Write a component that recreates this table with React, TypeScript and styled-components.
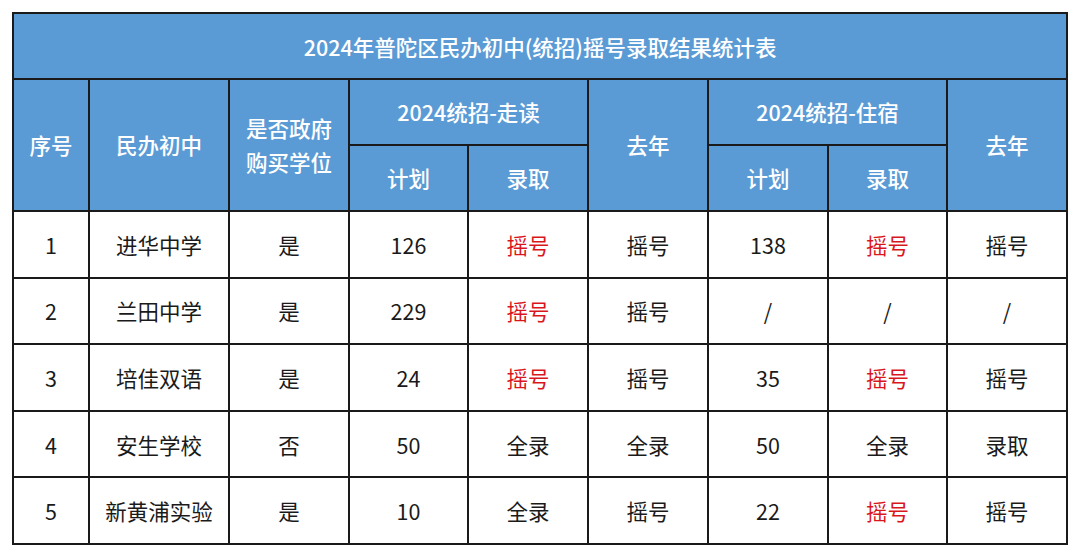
import React from 'react';
import styled, { createGlobalStyle } from 'styled-components';

const GlobalStyle = createGlobalStyle`
  html, body {
    margin: 0;
    padding: 0;
    background: #ffffff;
    font-family: "Noto Sans CJK SC", "Noto Sans", sans-serif;
  }
`;

const Page = styled.div`
  padding: 12px 12px 0 12px;
`;

const Table = styled.table`
  width: 1056px;
  border-collapse: collapse;
  table-layout: fixed;
  border: 2px solid #1a1a1a;
`;

const HeadRow = styled.tr<{ h: number }>`
  height: ${p => p.h}px;
`;

const TitleCell = styled.th`
  padding: 0;
  background: #5b9bd5;
  color: #ffffff;
  font-size: 21.5px;
  font-weight: 500;
  text-align: center;
  border: 2px solid #1a1a1a;
`;

const HeadCell = styled.th`
  padding: 0;
  background: #5b9bd5;
  color: #ffffff;
  font-size: 21.5px;
  font-weight: 500;
  line-height: 34px;
  text-align: center;
  vertical-align: middle;
  border: 2px solid #1a1a1a;
`;

const Row = styled.tr`
  height: 66.6px;
`;

const Cell = styled.td<{ red?: boolean }>`
  padding: 0;
  text-align: center;
  vertical-align: middle;
  font-size: 21.5px;
  color: ${p => (p.red ? '#d9161c' : '#1a1a1a')};
  border: 2px solid #1a1a1a;
`;

interface SchoolRow {
  no: number;
  name: string;
  bought: string;
  walkPlan: string;
  walkAdmit: string;
  walkLast: string;
  boardPlan: string;
  boardAdmit: string;
  boardLast: string;
}

const rows: SchoolRow[] = [
  { no: 1, name: '进华中学', bought: '是', walkPlan: '126', walkAdmit: '摇号', walkLast: '摇号', boardPlan: '138', boardAdmit: '摇号', boardLast: '摇号' },
  { no: 2, name: '兰田中学', bought: '是', walkPlan: '229', walkAdmit: '摇号', walkLast: '摇号', boardPlan: '/', boardAdmit: '/', boardLast: '/' },
  { no: 3, name: '培佳双语', bought: '是', walkPlan: '24', walkAdmit: '摇号', walkLast: '摇号', boardPlan: '35', boardAdmit: '摇号', boardLast: '摇号' },
  { no: 4, name: '安生学校', bought: '否', walkPlan: '50', walkAdmit: '全录', walkLast: '全录', boardPlan: '50', boardAdmit: '全录', boardLast: '录取' },
  { no: 5, name: '新黄浦实验', bought: '是', walkPlan: '10', walkAdmit: '全录', walkLast: '摇号', boardPlan: '22', boardAdmit: '摇号', boardLast: '摇号' },
];

const widths = [76, 140, 120, 119, 120, 120, 120, 119, 120];

export default function App() {
  return (
    <Page>
      <GlobalStyle />
      <Table>
        <colgroup>
          {widths.map((w, i) => (
            <col key={i} style={{ width: w }} />
          ))}
        </colgroup>
        <thead>
          <HeadRow h={66}>
            <TitleCell colSpan={9}>2024年普陀区民办初中(统招)摇号录取结果统计表</TitleCell>
          </HeadRow>
          <HeadRow h={66}>
            <HeadCell rowSpan={2}>序号</HeadCell>
            <HeadCell rowSpan={2}>民办初中</HeadCell>
            <HeadCell rowSpan={2}>
              是否政府
              <br />
              购买学位
            </HeadCell>
            <HeadCell colSpan={2}>2024统招-走读</HeadCell>
            <HeadCell rowSpan={2}>去年</HeadCell>
            <HeadCell colSpan={2}>2024统招-住宿</HeadCell>
            <HeadCell rowSpan={2}>去年</HeadCell>
          </HeadRow>
          <HeadRow h={66}>
            <HeadCell>计划</HeadCell>
            <HeadCell>录取</HeadCell>
            <HeadCell>计划</HeadCell>
            <HeadCell>录取</HeadCell>
          </HeadRow>
        </thead>
        <tbody>
          {rows.map(r => (
            <Row key={r.no}>
              <Cell>{r.no}</Cell>
              <Cell>{r.name}</Cell>
              <Cell>{r.bought}</Cell>
              <Cell>{r.walkPlan}</Cell>
              <Cell red={r.walkAdmit === '摇号'}>{r.walkAdmit}</Cell>
              <Cell>{r.walkLast}</Cell>
              <Cell>{r.boardPlan}</Cell>
              <Cell red={r.boardAdmit === '摇号'}>{r.boardAdmit}</Cell>
              <Cell>{r.boardLast}</Cell>
            </Row>
          ))}
        </tbody>
      </Table>
    </Page>
  );
}
